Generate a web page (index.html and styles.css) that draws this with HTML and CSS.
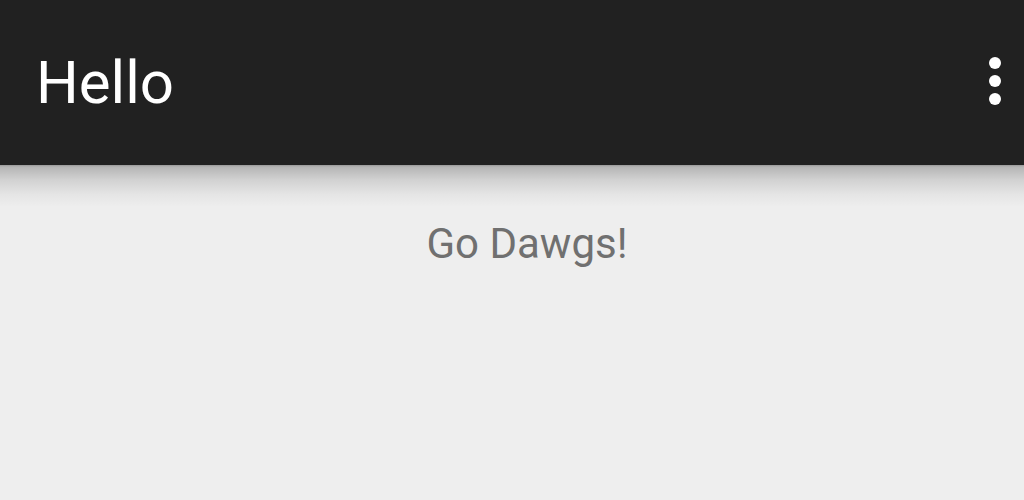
FILE: index.html
```html
<!DOCTYPE html>
<html>
<head>
<meta charset="utf-8">
<link rel="stylesheet" href="styles.css">
</head>
<body>
<header class="toolbar">
  <h1 class="title">Hello</h1>
  <button class="overflow" aria-label="More options">
    <svg width="24" height="60" viewBox="0 0 24 60">
      <circle cx="12" cy="12" r="6" fill="#fff"/>
      <circle cx="12" cy="30" r="6" fill="#fff"/>
      <circle cx="12" cy="48" r="6" fill="#fff"/>
    </svg>
  </button>
</header>
<main class="content">
  <p class="message">Go Dawgs!</p>
</main>
</body>
</html>
```
FILE: styles.css
```css
html, body {
  margin: 0;
  padding: 0;
  height: 100%;
}
body {
  background: #eeeeee;
  font-family: Roboto, "Liberation Sans", sans-serif;
  overflow: hidden;
}
.toolbar {
  position: relative;
  height: 165px;
  background: #212121;
  display: flex;
  align-items: center;
  justify-content: space-between;
  padding: 0 17px 0 36px;
  box-sizing: border-box;
}
.toolbar::after {
  content: "";
  position: absolute;
  left: 0;
  right: 0;
  top: 165px;
  height: 42px;
  background: linear-gradient(to bottom, rgba(0,0,0,0.36) 0, rgba(0,0,0,0.24) 2px, rgba(0,0,0,0.12) 35%, rgba(0,0,0,0.04) 70%, rgba(0,0,0,0) 100%);
}
.title {
  margin: 0;
  color: #ffffff;
  font-size: 60px;
  font-weight: 400;
  line-height: 1;
}
.overflow {
  background: none;
  border: 0;
  padding: 0;
  margin-bottom: 3px;
  display: flex;
}
.content {
  display: flex;
  justify-content: center;
  padding-top: 58px;
  padding-left: 30px;
}
.message {
  margin: 0;
  color: #707070;
  font-size: 42px;
  line-height: 1;
}
```
